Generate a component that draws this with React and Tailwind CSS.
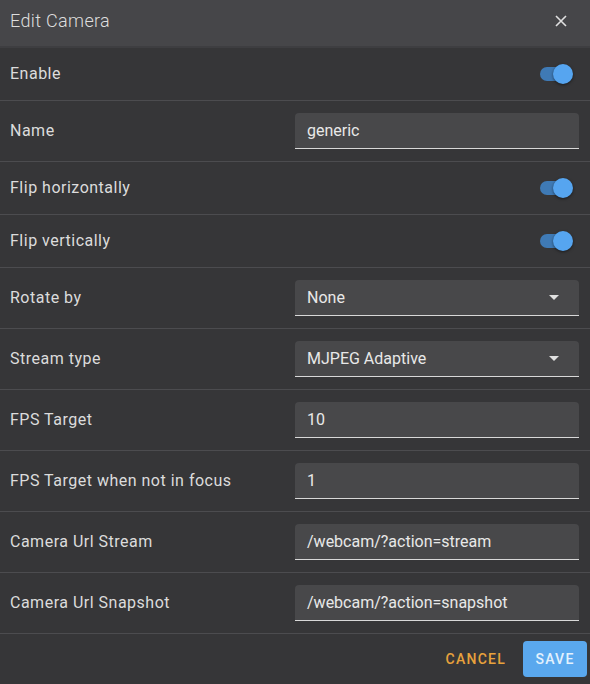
import React from "react";

function Toggle() {
  return (
    <div className="relative w-[36px] h-[20px] flex items-center">
      <div className="w-[30px] h-[14px] rounded-full bg-[#3f7ab5] ml-[3px]" />
      <div className="absolute right-0 top-0 w-[20px] h-[20px] rounded-full bg-[#56a5f0] shadow-[0_1px_3px_rgba(0,0,0,0.5)]" />
    </div>
  );
}

function Field({ value, select }) {
  return (
    <div className="w-[284px] h-[36px] bg-[#48484a] rounded-t-[4px] border-b border-[#d8d8d8] flex items-center justify-between px-3">
      <span className="text-[16px] text-[#e8e8e8]">{value}</span>
      {select && (
        <svg width="10" height="5" viewBox="0 0 10 5" className="mr-[8px]">
          <path d="M0 0 L10 0 L5 5 Z" fill="#e0e0e0" />
        </svg>
      )}
    </div>
  );
}

function Row({ label, children, tall }) {
  return (
    <div
      className={`flex items-center justify-between pl-[10px] pr-[11px] border-b border-[#4c4c4f] ${
        tall ? "h-[61px]" : "h-[53px]"
      }`}
    >
      <span className="text-[16px] tracking-[0.5px] text-[#dcdcdc]">{label}</span>
      {children}
    </div>
  );
}

function ToggleRow({ label }) {
  return (
    <div className="flex items-center justify-between pl-[10px] pr-[17px] border-b border-[#4c4c4f] h-[53px]">
      <span className="text-[16px] tracking-[0.5px] text-[#dcdcdc]">{label}</span>
      <Toggle />
    </div>
  );
}

export default function App() {
  return (
    <div
      className="w-[590px] h-[684px] bg-[#363638] flex flex-col"
      style={{ fontFamily: "Roboto, 'Liberation Sans', sans-serif" }}
    >
      <div className="h-[48px] bg-[#464649] border-b-[2px] border-[#3e3e41] flex items-center justify-between pl-[10px] pr-[23px] pb-[5px]">
        <span className="text-[18px] tracking-[0.35px] text-[#dedede] font-light">Edit Camera</span>
        <svg width="12" height="12" viewBox="0 0 12 12">
          <path d="M1 1 L11 11 M11 1 L1 11" stroke="#e0e0e0" strokeWidth="1.6" />
        </svg>
      </div>
      <ToggleRow label="Enable" />
      <Row label="Name" tall>
        <Field value="generic" />
      </Row>
      <ToggleRow label="Flip horizontally" />
      <ToggleRow label="Flip vertically" />
      <Row label="Rotate by" tall>
        <Field value="None" select />
      </Row>
      <Row label="Stream type" tall>
        <Field value="MJPEG Adaptive" select />
      </Row>
      <Row label="FPS Target" tall>
        <Field value="10" />
      </Row>
      <Row label="FPS Target when not in focus" tall>
        <Field value="1" />
      </Row>
      <Row label="Camera Url Stream" tall>
        <Field value="/webcam/?action=stream" />
      </Row>
      <Row label="Camera Url Snapshot" tall>
        <Field value="/webcam/?action=snapshot" />
      </Row>
      <div className="flex-1 flex items-center justify-end gap-[8px] pr-[3px]">
        <button className="h-[36px] px-[9px] text-[14px] font-medium tracking-[1.25px] text-[#e8a23c]">
          CANCEL
        </button>
        <button className="h-[36px] w-[64px] rounded-[4px] bg-[#5aa8ee] text-[14px] font-medium tracking-[1.25px] text-[#e3f1fd]">
          SAVE
        </button>
      </div>
    </div>
  );
}
